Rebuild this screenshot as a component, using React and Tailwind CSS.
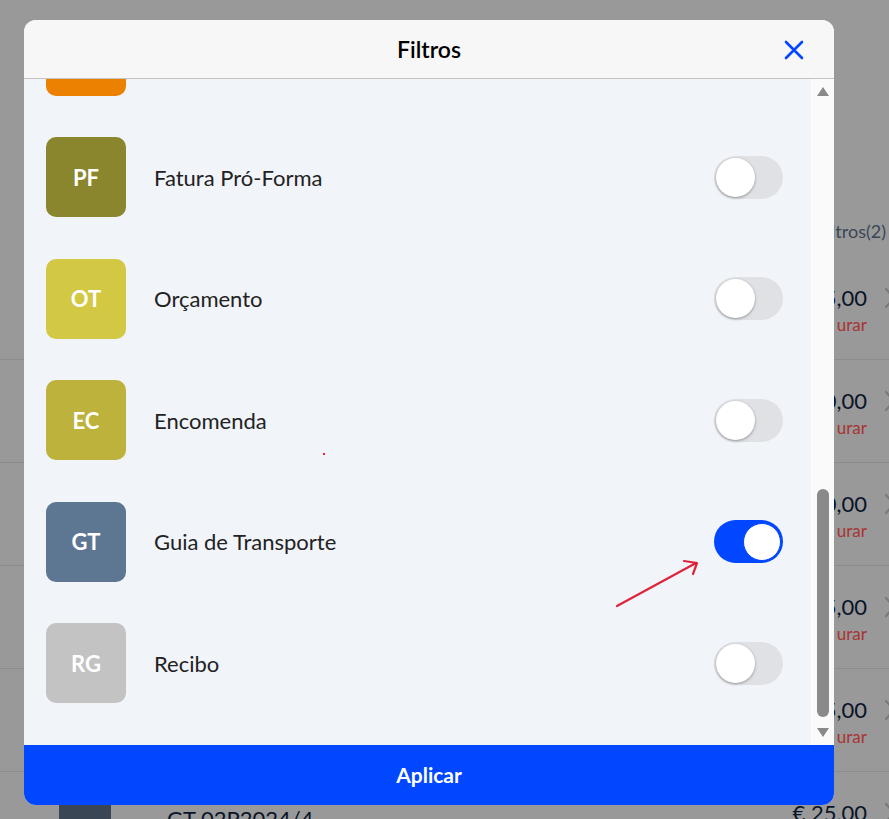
import React from 'react';

const docTypes = [
  { code: '', label: '', color: 'bg-[#ec8000]', on: false, hidden: true },
  { code: 'PF', label: 'Fatura Pró-Forma', color: 'bg-[#8a862d]', on: false },
  { code: 'OT', label: 'Orçamento', color: 'bg-[#d3c843]', on: false },
  { code: 'EC', label: 'Encomenda', color: 'bg-[#bdb23c]', on: false },
  { code: 'GT', label: 'Guia de Transporte', color: 'bg-[#5d7692]', on: true },
  { code: 'RG', label: 'Recibo', color: 'bg-[#c3c3c3]', on: false },
];

function Toggle({ on }) {
  if (on) {
    return (
      <div className="w-[69px] h-[43px] rounded-full bg-[#0047ff] flex items-center justify-end pr-[2px]">
        <div className="w-[38px] h-[38px] rounded-full bg-white border border-[#0047ff]" />
      </div>
    );
  }
  return (
    <div className="w-[69px] h-[43px] rounded-full bg-[#dfe1e5] flex items-center pl-[2px]">
      <div className="w-[39px] h-[39px] rounded-full bg-white shadow-[0_1px_3px_rgba(0,0,0,0.35)]" />
    </div>
  );
}

function BgRow({ amount, status, last }) {
  return (
    <div className="h-[103px] border-b border-[#8c8c8c] flex items-start pl-[59px]">
      <div className="w-[52px] h-[52px] mt-[32px] bg-[#3a4654]" />
      <div className="ml-[56px] mt-[30px] text-[22px] text-[#0a1428]">{last ? 'GT 02P2024/4' : 'FT 02P2024/1'}</div>
      <div className="flex-1" />
      <div className="flex flex-col items-end mt-[26px]">
        <div className="text-[22px] leading-[30px] text-[#0a1428]">{amount}</div>
        <div className="text-[17px] leading-[24px] text-[#a83434]">{status}</div>
      </div>
      <div className="w-[22px] shrink-0 mt-[30px]">
        <svg className="ml-[17px]" width="12" height="22" viewBox="0 0 12 22" fill="none" stroke="#7a7a7a" strokeWidth="2.2" strokeLinecap="round">
          <path d="M2 2L10 11L2 20" />
        </svg>
      </div>
    </div>
  );
}

export default function App() {
  return (
    <div className="relative w-full h-[819px] overflow-hidden bg-[#999999] font-['Lato','Noto_Sans',sans-serif]">
      {/* page behind the overlay */}
      <div className="flex flex-col">
        <div className="h-[257px] flex justify-end items-start pr-[3px] pt-[218px]">
          <span className="text-[18px] text-[#3a4656]">Filtros(2)</span>
        </div>
        <BgRow amount="€ 15,00" status="Por liquidar urar" />
        <BgRow amount="€ 10,00" status="Por liquidar urar" />
        <BgRow amount="€ 20,00" status="Por liquidar urar" />
        <BgRow amount="€ 15,00" status="Por liquidar urar" />
        <BgRow amount="€ 35,00" status="Por liquidar urar" />
        <BgRow amount="€ 25,00" status="Por liquidar urar" last />
      </div>

      {/* modal */}
      <div className="absolute left-[24px] top-[20px] w-[810px] h-[785px] rounded-[12px] overflow-hidden flex flex-col bg-[#f1f4f9]">
        <div className="h-[59px] shrink-0 bg-[#f7f7f7] border-b border-[#c4c4c4] relative flex items-center justify-center">
          <span className="text-[23px] font-semibold text-black">Filtros</span>
          <svg className="absolute right-[30px] top-[20px]" width="20" height="20" viewBox="0 0 20 20" fill="none" stroke="#0047ff" strokeWidth="2.6" strokeLinecap="round">
            <path d="M2 2L18 18M18 2L2 18" />
          </svg>
        </div>

        <div className="flex-1 flex min-h-0">
          <div className="flex-1 overflow-hidden">
            <div className="-mt-[84px] flex flex-col">
              {docTypes.map((d, i) => (
                <div key={i} className="h-[121.5px] shrink-0 flex items-center pl-[22px] pr-[28px]">
                  <div className={`w-[80px] h-[80px] rounded-[10px] ${d.color} flex items-center justify-center text-white text-[22px] font-bold`}>
                    {d.code}
                  </div>
                  <span className="ml-[28px] text-[22px] text-[#222]">{d.label}</span>
                  <div className="flex-1" />
                  {!d.hidden && <Toggle on={d.on} />}
                </div>
              ))}
            </div>
          </div>
          <div className="w-[23px] bg-[#fafafa] flex flex-col items-center">
            <svg className="mt-[7px]" width="14" height="11" viewBox="0 0 14 11">
              <path d="M7 1L13 10H1Z" fill="#8a8a8a" />
            </svg>
            <div className="mt-[392px] w-[12px] h-[228px] rounded-full bg-[#8a8a8a]" />
            <svg className="mt-[10px]" width="14" height="11" viewBox="0 0 14 11">
              <path d="M1 1H13L7 10Z" fill="#8a8a8a" />
            </svg>
          </div>
        </div>

        <div className="h-[60px] shrink-0 bg-[#0047ff] flex items-center justify-center">
          <span className="text-[21px] font-bold text-white">Aplicar</span>
        </div>
      </div>

      {/* annotation */}
      <svg className="absolute left-0 top-0" width="889" height="819" viewBox="0 0 889 819" fill="none">
        <rect x="323" y="453" width="2" height="2" fill="#e8203a" />
        <path d="M617 606L696 563M684 561L697 563L693 574" stroke="#e0233a" strokeWidth="2.2" strokeLinecap="round" strokeLinejoin="round" />
      </svg>
    </div>
  );
}
